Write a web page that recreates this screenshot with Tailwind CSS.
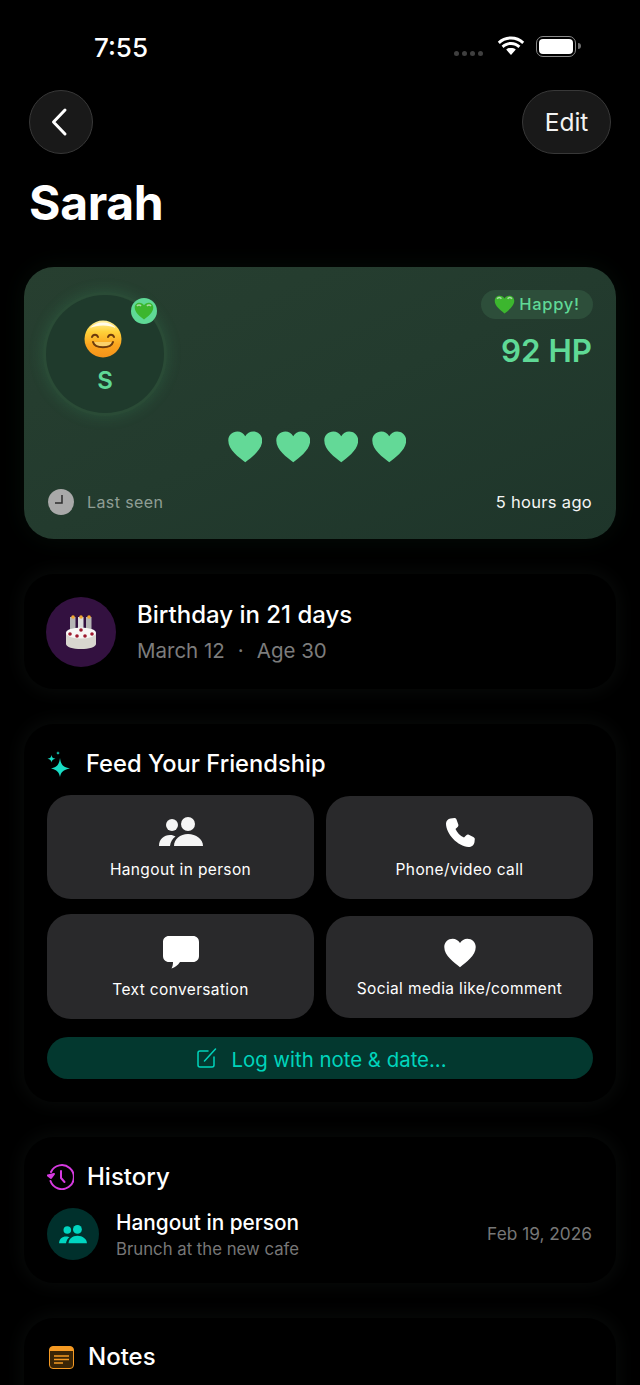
<!DOCTYPE html>
<html lang="en"><head><meta charset="utf-8">
<script src="https://cdn.jsdelivr.net/npm/@tailwindcss/browser@4"></script>
</head>
<body class="bg-black">
<div class="w-[640px] h-[1385px] overflow-hidden bg-black text-white font-['Inter','Liberation_Sans',sans-serif] flex flex-col">
  <!-- status bar -->
  <div class="h-[90px] shrink-0 flex items-start justify-between pl-[94px] pr-[64px] pt-[33px]">
    <span class="text-[26px] leading-[30px] font-medium">7:55</span>
    <div class="flex items-center mt-[3px]">
      <div class="flex gap-[3px] mt-[14px] mr-[14px]"><i class="block w-[5px] h-[5px] rounded-full bg-[#3f3f3f]"></i><i class="block w-[5px] h-[5px] rounded-full bg-[#3f3f3f]"></i><i class="block w-[5px] h-[5px] rounded-full bg-[#3f3f3f]"></i><i class="block w-[5px] h-[5px] rounded-full bg-[#3f3f3f]"></i></div>
      <svg class="w-[28px] h-[21px] mr-[11px]" viewBox="0 0 28 21" fill="none"><path d="M14 3.500c-4.400 0-8.300 1.700-11.200 4.400l-2-2.200C4.300 2.400 8.900.5 14 .5s9.700 1.900 13.200 5.200l-2 2.200C22.300 5.200 18.400 3.500 14 3.500z" fill="#fff"/><path d="M14 9c-2.900 0-5.500 1.100-7.400 2.900l-2-2.200C7.100 7.400 10.400 6 14 6s6.900 1.400 9.400 3.700l-2 2.200C19.500 10.100 16.900 9 14 9z" fill="#fff"/><path d="M14 11.800c-1.800 0-3.500.7-4.800 1.800l4.800 5.400 4.800-5.400c-1.300-1.100-3-1.800-4.800-1.800z" fill="#fff"/></svg>
      <div class="relative w-[40px] h-[21px] rounded-[7px] border-[1.500px] border-[#8a8a8a] p-[2px]">
        <div class="w-full h-full rounded-[4px] bg-white"></div>
        <i class="absolute right-[-6px] top-[6px] block w-[3px] h-[6px] rounded-r-full bg-[#6f6f6f]"></i>
      </div>
    </div>
  </div>
  <!-- nav -->
  <div class="h-[64px] shrink-0 flex items-center justify-between pl-[29px] pr-[29px]">
    <div class="w-[64px] h-[64px] rounded-full bg-[#191919] border border-[#383838] flex items-center justify-center">
      <svg class="w-[20px] h-[30px] mr-[4px]" viewBox="0 0 20 30" fill="none"><path d="M16 3 4.500 15 16 27" stroke="#fff" stroke-width="3" stroke-linecap="round" stroke-linejoin="round"/></svg>
    </div>
    <div class="w-[89px] h-[64px] pt-[1px] rounded-full bg-[#191919] border border-[#383838] flex items-center justify-center text-[24.500px] text-[#f2f2f2]">Edit</div>
  </div>
  <h1 class="mt-[21px] ml-[29px] text-[48px] leading-[56px] font-bold tracking-[-0.3px]">Sarah</h1>

  <div class="mt-[36px] mx-[24px] flex flex-col gap-[35px]">
    <!-- health card -->
    <section class="relative h-[272px] shrink-0 rounded-[30px] bg-gradient-to-br from-[#273f30] via-[#233b2e] to-[#1e352a] shadow-[0_0_26px_rgba(70,180,110,0.07)] pl-[22px] pr-[23px] pt-[23px]">
      <div class="flex justify-between items-start">
        <div class="relative w-[118px] h-[118px] mt-[5px] rounded-full bg-[#1f3a2c] shadow-[0_0_0_3px_#2a4b36,0_0_14px_5px_rgba(70,190,120,0.14)] flex flex-col items-center pt-[25px]">
          <svg class="w-[38px] h-[38px] -ml-[4px]" viewBox="0 0 38 38"><defs><linearGradient id="fc" x1="0" y1="0" x2="0" y2="1"><stop offset="0" stop-color="#fff0a0"/><stop offset=".3" stop-color="#ffd23a"/><stop offset=".65" stop-color="#fba51f"/><stop offset="1" stop-color="#f5931a"/></linearGradient></defs><circle cx="19" cy="19" r="18.500" fill="url(#fc)"/><path d="M6 8c3-3.500 8-5.500 13-5.500S29 4.500 32 8c-3.500-1.500-8-2.500-13-2.500S9.500 6.500 6 8z" fill="#fff" opacity=".85"/><path d="M8 17c1-3 5-3 6 0M24 17c1-3 5-3 6 0" fill="none" stroke="#6d3a0c" stroke-width="2" stroke-linecap="round"/><path d="M9 22c2 7 18 7 20 0" fill="#fbd06a" stroke="#6d3a0c" stroke-width="2" stroke-linecap="round"/></svg>
          <span class="mt-[9px] text-[24px] leading-[28px] font-semibold text-[#5fd996]">S</span>
          <div class="absolute top-[3px] right-[7px] w-[26px] h-[26px] rounded-full bg-[#5fd996] flex items-center justify-center">
            <svg class="w-[20px] h-[18px]" viewBox="0 0 20 18"><path d="M10 17.500C6 14.500 .7 10.500.7 5.500.7 2.500 3 .7 5.500.7 7.500.7 9 1.700 10 3.200 11 1.700 12.500.7 14.500.7 17 .7 19.300 2.500 19.300 5.500c0 5-5.300 9-9.300 12z" fill="#3cb62e"/><path d="M3 4c1-1.500 3-1.500 4 0M13 4c1-1.500 3-1.500 4 0" stroke="#a9d8a8" stroke-width="1.500" fill="none"/></svg>
          </div>
        </div>
        <div class="flex flex-col items-end">
          <div class="w-[112px] h-[29px] rounded-full bg-[#2d4e3a] flex items-center justify-center gap-[4px] text-[16.500px] font-medium tracking-[0.7px] text-[#5fd996]">
            <svg class="w-[21px] h-[19px] shrink-0" viewBox="0 0 20 18"><path d="M10 17.500C6 14.500 .7 10.500.7 5.500.7 2.500 3 .7 5.500.7 7.500.7 9 1.700 10 3.200 11 1.700 12.500.7 14.500.7 17 .7 19.300 2.500 19.300 5.500c0 5-5.300 9-9.300 12z" fill="#3cb62e"/><path d="M3 3.500c1-1.500 3-1.500 4 0M13 3.500c1-1.500 3-1.500 4 0" stroke="#a9d8a8" stroke-width="1.500" fill="none"/></svg>
            <span>Happy!</span>
          </div>
          <span class="mt-[12px] mr-[1px] text-[31.300px] leading-[40px] font-semibold text-[#5fd996]">92 HP</span>
        </div>
      </div>
      <div class="absolute left-[203.500px] top-[164px] flex gap-[13.500px]">
        <svg class="w-[34.500px] h-[32px]" viewBox="0 0 35 32"><path d="M17.500 31.500C11 26.500.3 19 .3 9.500.3 4 4.500.3 9.500.3c3.300 0 6.300 1.800 8 4.700 1.700-2.900 4.700-4.700 8-4.700 5 0 9.200 3.700 9.200 9.200 0 9.500-10.700 17-17.200 22z" fill="#63d997"/></svg>
        <svg class="w-[34.500px] h-[32px]" viewBox="0 0 35 32"><path d="M17.500 31.500C11 26.500.3 19 .3 9.500.3 4 4.500.3 9.500.3c3.300 0 6.300 1.800 8 4.700 1.700-2.900 4.700-4.700 8-4.700 5 0 9.200 3.700 9.200 9.200 0 9.500-10.700 17-17.200 22z" fill="#63d997"/></svg>
        <svg class="w-[34.500px] h-[32px]" viewBox="0 0 35 32"><path d="M17.500 31.500C11 26.500.3 19 .3 9.500.3 4 4.500.3 9.500.3c3.300 0 6.300 1.800 8 4.700 1.700-2.900 4.700-4.700 8-4.700 5 0 9.200 3.700 9.200 9.200 0 9.500-10.700 17-17.200 22z" fill="#63d997"/></svg>
        <svg class="w-[34.500px] h-[32px]" viewBox="0 0 35 32"><path d="M17.500 31.500C11 26.500.3 19 .3 9.500.3 4 4.500.3 9.500.3c3.300 0 6.300 1.800 8 4.700 1.700-2.900 4.700-4.700 8-4.700 5 0 9.200 3.700 9.200 9.200 0 9.500-10.700 17-17.200 22z" fill="#63d997"/></svg>
      </div>
      <div class="absolute left-[24px] right-[24px] top-[221.500px] h-[27px] flex items-center justify-between text-[16px]">
        <div class="flex items-center gap-[13px]">
          <div class="w-[26px] h-[26px] rounded-full bg-[#a9a9a9] flex items-center justify-center"><svg class="w-[26px] h-[26px]" viewBox="0 0 26 26" fill="none"><path d="M14 6v8H7" stroke="#2c2c2c" stroke-width="1.500"/></svg></div>
          <span class="text-[#8f9e95] tracking-[0.4px]">Last seen</span>
        </div>
        <span class="text-[#f5f5f5] text-[16.500px] tracking-[0.3px]">5 hours ago</span>
      </div>
    </section>

    <!-- birthday -->
    <section class="h-[115px] shrink-0 rounded-[30px] bg-black shadow-[0_0_18px_4px_rgba(90,110,100,0.09)] px-[22px] flex items-center gap-[21px]">
      <div class="w-[70px] h-[70px] rounded-full bg-[#331140] flex items-center justify-center">
        <svg class="w-[32px] h-[34px]" viewBox="0 0 32 34"><rect x="5" y="2" width="5.500" height="14" fill="#b4b4b4"/><rect x="13" y="2" width="5.500" height="14" fill="#dcdcdc"/><rect x="21" y="2" width="5.500" height="14" fill="#b4b4b4"/><circle cx="8" cy="2" r="1.800" fill="#f2a72e"/><circle cx="16" cy="2" r="1.800" fill="#f2a72e"/><circle cx="24" cy="2" r="1.800" fill="#f2a72e"/><path d="M1 19c0-3 7-5 15-5s15 2 15 5v10c0 3-7 5-15 5S1 32 1 29z" fill="#d8d6cf"/><ellipse cx="16" cy="18" rx="15" ry="5.500" fill="#f7f7f5"/><circle cx="5" cy="19" r="1.800" fill="#9e1b2f"/><circle cx="12" cy="21" r="1.800" fill="#9e1b2f"/><circle cx="20" cy="21" r="1.800" fill="#9e1b2f"/><circle cx="27" cy="19" r="1.800" fill="#9e1b2f"/><circle cx="16" cy="15" r="1.800" fill="#9e1b2f"/></svg>
      </div>
      <div class="flex flex-col">
        <span class="text-[24px] leading-[30px] font-medium">Birthday in 21 days</span>
        <span class="mt-[8px] text-[20.500px] leading-[26px] text-[#7c7c7c]">March 12<span class="mx-[13px]">·</span>Age 30</span>
      </div>
    </section>

    <!-- feed -->
    <section class="h-[378px] shrink-0 rounded-[30px] bg-black shadow-[0_0_18px_4px_rgba(90,110,100,0.09)] px-[23px] pt-[26px]">
      <div class="h-[27px] flex items-center gap-[15px]">
        <svg class="w-[24px] h-[26px] shrink-0" viewBox="0 0 24 26" fill="#19dcc4"><path d="M13 7c1 7 3 9 10 10.500-7 1.500-9 3.500-10 8.500-1-5-3-7-9-8.500C10 16 12 14 13 7z"/><path d="M4.500 4c.4 2.500 1.300 3.300 4 3.800-2.700.6-3.600 1.400-4 3.700-.4-2.300-1.300-3.100-4-3.700 2.700-.5 3.600-1.300 4-3.800z"/><path d="M11 0c.2 1.300.7 1.800 2 2-1.300.3-1.800.8-2 2-.2-1.200-.7-1.700-2-2 1.300-.2 1.800-.7 2-2z"/></svg>
        <span class="text-[23.700px] leading-[27px] font-medium">Feed Your Friendship</span>
      </div>
      <div class="mt-[18px] grid grid-cols-2 gap-x-[12px] items-center">
        <div class="flex flex-col gap-[15px]">
          <div class="h-[104px] rounded-[24px] bg-[#29292b] flex flex-col items-center pt-[22px]">
            <svg class="w-[44px] h-[30px]" viewBox="0 0 44 30" fill="#f5f5f5"><circle cx="13" cy="8" r="6"/><circle cx="29" cy="7" r="7"/><path d="M0 29c0-7 5-11 11-11 2.500 0 4 .6 5.500 1.500C13.500 21.500 11.500 25 11 29z"/><path d="M15 29c0-7 6-12 14-12s15 5 15 12z"/></svg>
            <span class="mt-[12px] text-[15.500px] leading-[22px] tracking-[0.36px]">Hangout in person</span>
          </div>
          <div class="h-[105px] rounded-[24px] bg-[#29292b] flex flex-col items-center pt-[22px]">
            <svg class="w-[36px] h-[33px]" viewBox="0 0 36 33" fill="#fff"><path d="M6 0h24c3.500 0 6 2.500 6 6v14c0 3.500-2.500 6-6 6H17c-2 3-5 5.500-8.500 6.500 1-2 1.500-4 1.500-6.500H6c-3.500 0-6-2.500-6-6V6c0-3.500 2.500-6 6-6z"/></svg>
            <span class="mt-[10px] text-[15.500px] leading-[22px] tracking-[0.36px]">Text conversation</span>
          </div>
        </div>
        <div class="flex flex-col gap-[17px]">
          <div class="h-[103px] rounded-[24px] bg-[#29292b] flex flex-col items-center pt-[22px]">
            <svg class="w-[30px] h-[30px]" viewBox="0 0 30 30" fill="#fff"><path d="M5.500.5 9.500 0c1 0 1.500.5 2 1.500l1.800 5c.3 1 0 1.800-.7 2.500l-2.100 2c1.500 3.500 4.500 7 8.500 8.500l2.300-2.300c.7-.7 1.500-.9 2.500-.5l4.500 2.200c1 .5 1.500 1.200 1.500 2.200l-.3 2.900c-.3 3-3 5-6 5C13 28.500 1 16 1 5.500 1 3 3 .8 5.500.5z"/></svg>
            <span class="mt-[11px] text-[15.500px] leading-[22px] tracking-[0.36px]">Phone/video call</span>
          </div>
          <div class="h-[102px] rounded-[24px] bg-[#29292b] flex flex-col items-center pt-[22px]">
            <svg class="w-[32px] h-[30px]" viewBox="0 0 35 32"><path d="M17.500 31.500C11 26.500.3 19 .3 9.500.3 4 4.500.3 9.500.3c3.300 0 6.300 1.800 8 4.700 1.700-2.900 4.700-4.700 8-4.700 5 0 9.200 3.700 9.200 9.200 0 9.500-10.700 17-17.200 22z" fill="#fff"/></svg>
            <span class="mt-[10px] text-[15.500px] leading-[22px] tracking-[0.36px]">Social media like/comment</span>
          </div>
        </div>
      </div>
      <div class="mt-[18px] h-[42px] pt-[5px] pl-[4px] rounded-full bg-[#03382f] flex items-center justify-center gap-[14px] text-[20.400px] text-[#00d4bc]">
        <svg class="w-[20px] h-[20px] -mt-[5px]" viewBox="0 0 20 20" fill="none" stroke="#00d4bc" stroke-width="1.500" stroke-linecap="round"><path d="M11 3H3a2 2 0 0 0-2 2v12a2 2 0 0 0 2 2h12a2 2 0 0 0 2-2V9"/><path d="M7.500 13 18.500 1"/></svg>
        <span>Log with note &amp; date...</span>
      </div>
    </section>

    <!-- history -->
    <section class="h-[146px] shrink-0 rounded-[30px] bg-black shadow-[0_0_18px_4px_rgba(90,110,100,0.09)] px-[23px] pt-[26px]">
      <div class="h-[28px] flex items-center gap-[13px]">
        <svg class="w-[27px] h-[26px] shrink-0" viewBox="0 0 27 26" fill="none" stroke="#d63ae0" stroke-width="2" stroke-linecap="round" stroke-linejoin="round"><path d="M4 8a12 12 0 1 1-.5 9"/><path d="M14 7v7l3.500 4"/><path d="M0.800 11.500 4 14l3-4z" fill="#d63ae0"/></svg>
        <span class="text-[24px] leading-[28px] font-medium">History</span>
      </div>
      <div class="mt-[16px] flex items-center">
        <div class="w-[52px] h-[52px] rounded-full bg-[#00302c] flex items-center justify-center">
          <svg class="w-[28px] h-[19px]" viewBox="0 0 44 30" fill="#00d5c0"><circle cx="13" cy="8" r="6"/><circle cx="29" cy="7" r="7"/><path d="M0 29c0-7 5-11 11-11 2.500 0 4 .6 5.500 1.500C13.500 21.500 11.500 25 11 29z"/><path d="M15 29c0-7 6-12 14-12s15 5 15 12z"/></svg>
        </div>
        <div class="ml-[17px] mt-[2px] flex flex-col">
          <span class="text-[20.800px] leading-[27px] font-medium">Hangout in person</span>
          <span class="mt-[1px] text-[16.750px] leading-[24px] text-[#777]">Brunch at the new cafe</span>
        </div>
        <span class="ml-auto mr-[1px] text-[17.300px] text-[#777]">Feb 19, 2026</span>
      </div>
    </section>

    <!-- notes -->
    <section class="h-[120px] shrink-0 rounded-[30px] bg-black shadow-[0_0_18px_4px_rgba(90,110,100,0.09)] px-[25px] pt-[25px]">
      <div class="h-[28px] flex items-center gap-[14px]">
        <svg class="w-[25px] h-[23px] shrink-0" viewBox="0 0 25 23" fill="none"><rect x=".5" y=".5" width="24" height="22" rx="3.500" fill="#3a2506" stroke="#f59a23"/><path d="M.5 4a3.500 3.500 0 0 1 3.500-3.500h17A3.500 3.500 0 0 1 24.500 4v1H.5z" fill="#f59a23"/><path d="M5 10h15M5 13.500h15M5 17h9" stroke="#f59a23" stroke-width="1.500"/></svg>
        <span class="text-[24px] leading-[28px] font-medium">Notes</span>
      </div>
    </section>
  </div>
</div>
</body></html>
